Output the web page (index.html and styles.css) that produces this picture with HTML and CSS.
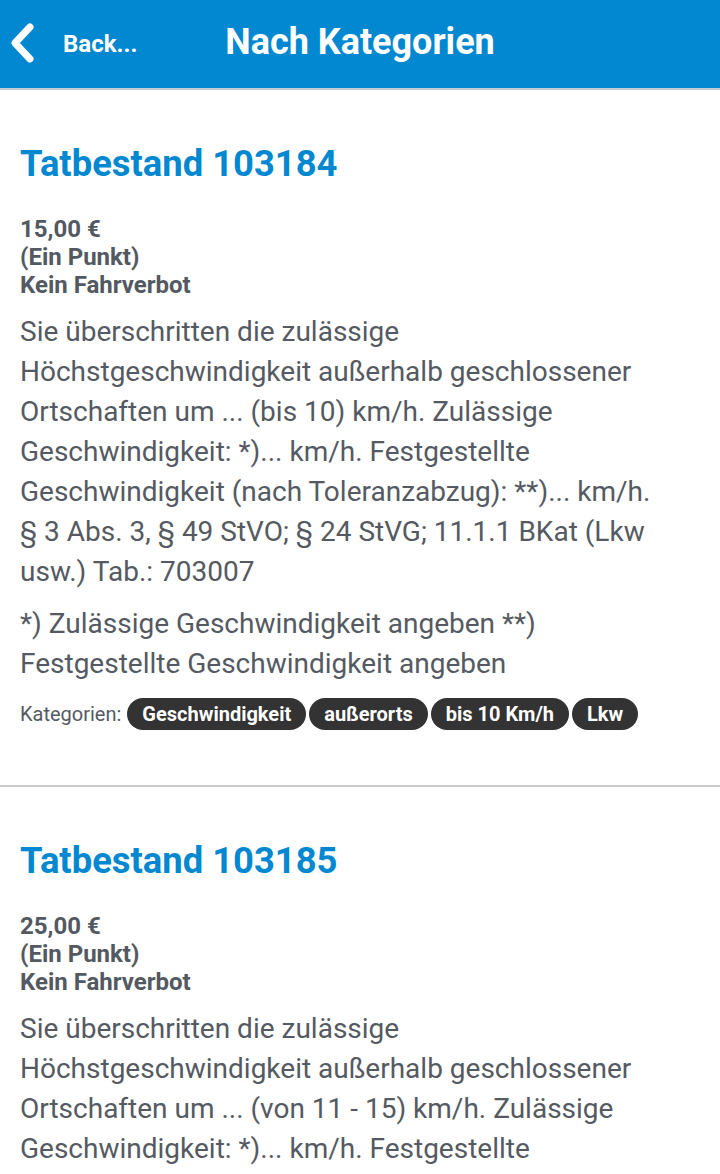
FILE: index.html
```html
<!DOCTYPE html>
<html lang="de">
<head>
<meta charset="utf-8">
<title>Nach Kategorien</title>
<link rel="stylesheet" href="styles.css">
</head>
<body>
<header class="topbar">
  <a class="back" href="#">
    <svg class="chev" width="30" height="42" viewBox="0 0 30 42"><path d="M22 5 L7 21 L22 37" fill="none" stroke="#fff" stroke-width="7" stroke-linecap="round" stroke-linejoin="round"/></svg>
    <span class="back-label">Back...</span>
  </a>
  <h1 class="page-title">Nach Kategorien</h1>
</header>
<main>
  <section class="card">
    <h2 class="card-title">Tatbestand 103184</h2>
    <div class="meta">
      <div>15,00 €</div>
      <div>(Ein Punkt)</div>
      <div>Kein Fahrverbot</div>
    </div>
    <p class="desc">Sie überschritten die zulässige Höchstgeschwindigkeit außerhalb geschlossener Ortschaften um ... (bis 10) km/h. Zulässige Geschwindigkeit: *)... km/h. Festgestellte Geschwindigkeit (nach Toleranzabzug): **)... km/h. § 3 Abs. 3, § 49 StVO; § 24 StVG; 11.1.1 BKat (Lkw usw.) Tab.: 703007</p>
    <p class="desc">*) Zulässige Geschwindigkeit angeben **) Festgestellte Geschwindigkeit angeben</p>
    <div class="cats">
      <span class="cats-label">Kategorien:</span>
      <span class="pill">Geschwindigkeit</span>
      <span class="pill">außerorts</span>
      <span class="pill">bis 10 Km/h</span>
      <span class="pill">Lkw</span>
    </div>
  </section>
  <section class="card">
    <h2 class="card-title">Tatbestand 103185</h2>
    <div class="meta">
      <div>25,00 €</div>
      <div>(Ein Punkt)</div>
      <div>Kein Fahrverbot</div>
    </div>
    <p class="desc">Sie überschritten die zulässige Höchstgeschwindigkeit außerhalb geschlossener Ortschaften um ... (von 11 - 15) km/h. Zulässige Geschwindigkeit: *)... km/h. Festgestellte Geschwindigkeit (nach Toleranzabzug): **)... km/h. § 3 Abs. 3, § 49 StVO; § 24 StVG; 11.1.2 BKat (Lkw usw.) Tab.: 703007</p>
  </section>
</main>
</body>
</html>
```
FILE: styles.css
```css
html, body {
  margin: 0;
  padding: 0;
  background: #fff;
  font-family: Roboto, "Noto Sans", sans-serif;
  overflow: hidden;
}
.topbar {
  position: relative;
  height: 88px;
  background: #0288d1;
  border-bottom: 2px solid #c4ccd2;
  display: flex;
  align-items: center;
  justify-content: center;
}
.back {
  position: absolute;
  left: 8px;
  top: 22px;
  display: flex;
  align-items: center;
  text-decoration: none;
  color: #fff;
}
.chev {
  display: block;
}
.back-label {
  margin-left: 25px;
  font-size: 24px;
  font-weight: 700;
  margin-top: 1px;
}
.page-title {
  margin: 0;
  color: #fff;
  font-size: 36px;
  font-weight: 700;
  line-height: 40px;
  margin-top: -4px;
}
.card {
  padding: 54px 50px 55px 20px;
  border-bottom: 2px solid #cccccc;
}
.card-title {
  margin: 0;
  color: #0288d1;
  font-size: 36.4px;
  font-weight: 700;
  line-height: 40px;
}
.meta {
  margin-top: 31px;
  color: #535961;
  font-size: 24px;
  font-weight: 700;
  line-height: 28px;
}
.desc {
  margin: 12px 0 0;
  color: #555a62;
  font-size: 28px;
  line-height: 40px;
}
.meta + .desc {
  margin-top: 13px;
}
.cats {
  margin-top: 14px;
  display: flex;
  align-items: center;
  flex-wrap: wrap;
  gap: 3px;
}
.cats-label {
  color: #555a62;
  font-size: 20px;
  margin-right: 3px;
}
.pill {
  background: #333333;
  color: #fff;
  font-size: 20px;
  font-weight: 700;
  height: 32px;
  line-height: 32px;
  padding: 0 15px;
  border-radius: 16px;
}
```
